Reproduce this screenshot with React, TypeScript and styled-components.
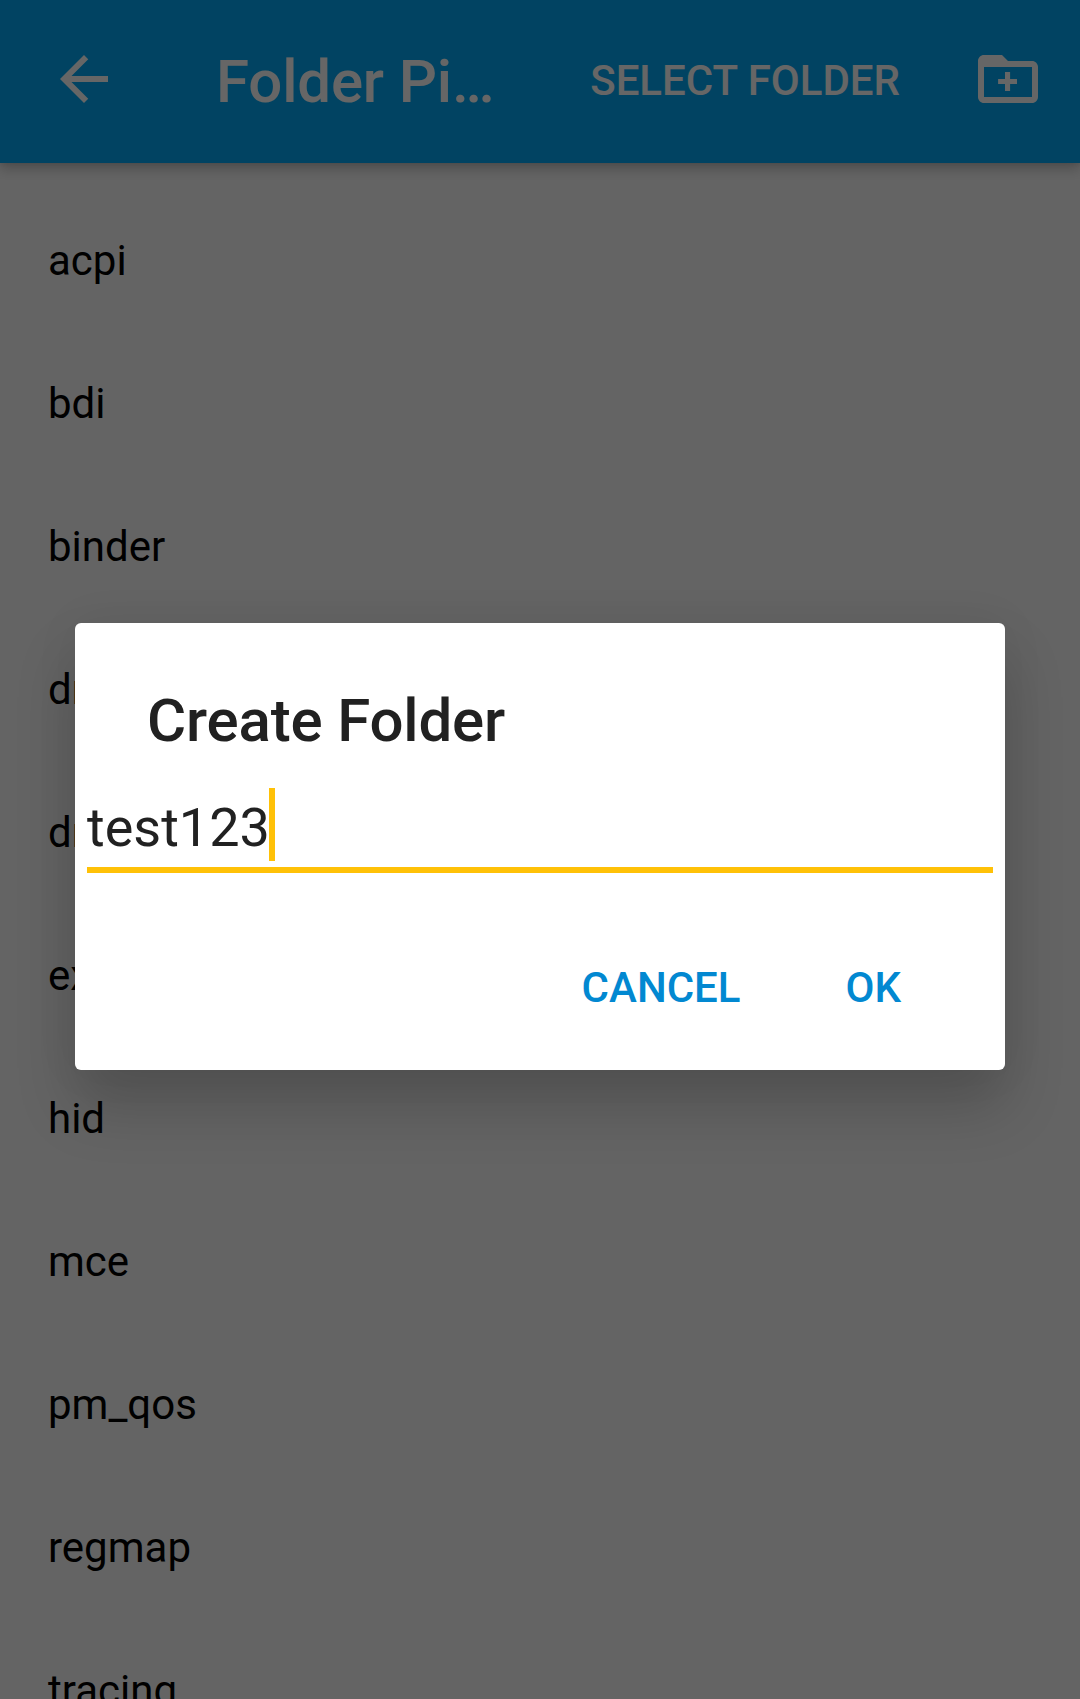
import React from 'react';
import styled, { createGlobalStyle } from 'styled-components';

const GlobalStyle = createGlobalStyle`
  * { box-sizing: border-box; }
  html, body { margin: 0; padding: 0; }
  body { overflow: hidden; font-family: Roboto, "Noto Sans", sans-serif; }
  h1, h2, ul { margin: 0; padding: 0; }
`;

const Screen = styled.div`
  position: relative;
  width: 1080px;
  height: 1699px;
  overflow: hidden;
  background: #fafafa;
`;

const Toolbar = styled.header`
  position: relative;
  display: flex;
  align-items: flex-start;
  height: 163px;
  padding: 43px 36px 0 48px;
  background: #03a9f4;
  color: #fff;
  box-shadow: 0 6px 12px rgba(0, 0, 0, 0.22), 0 1px 5px rgba(0, 0, 0, 0.08);
`;

const IconButton = styled.button`
  display: flex;
  flex: none;
  width: 72px;
  height: 72px;
  padding: 0;
  border: 0;
  background: none;
  color: inherit;

  svg {
    width: 72px;
    height: 72px;
    fill: currentColor;
  }
`;

const Title = styled.h1`
  width: 280px;
  margin-left: 96px;
  padding-top: 3px;
  overflow: hidden;
  font-size: 60px;
  font-weight: 500;
  letter-spacing: -0.17px;
  line-height: 72px;
  text-overflow: ellipsis;
  white-space: nowrap;
`;

const ToolbarAction = styled.button`
  margin-left: auto;
  margin-right: 72px;
  padding: 2px 0 0;
  border: 0;
  background: none;
  color: inherit;
  font: 500 42px/72px Roboto, sans-serif;
  text-transform: uppercase;
  white-space: nowrap;
`;

const FolderList = styled.ul`
  padding-top: 26px;
  list-style: none;
`;

const FolderRow = styled.li`
  display: flex;
  align-items: center;
  height: 143px;
  padding: 0 48px;
  color: #000;
  font-size: 42px;
`;

const Scrim = styled.div`
  position: absolute;
  inset: 0;
  display: flex;
  align-items: flex-start;
  justify-content: center;
  padding-top: 623px;
  background: rgba(0, 0, 0, 0.6);
`;

const Dialog = styled.section`
  display: flex;
  flex-direction: column;
  width: 930px;
  height: 447px;
  border-radius: 6px;
  background: #fff;
  color: #212121;
  box-shadow: 0 36px 60px rgba(0, 0, 0, 0.19), 0 0 48px rgba(0, 0, 0, 0.05);
`;

const DialogTitle = styled.h2`
  padding: 62px 72px 0;
  font-size: 60px;
  font-weight: 500;
  letter-spacing: -0.17px;
  line-height: 72px;
`;

const Field = styled.div`
  display: flex;
  align-items: flex-start;
  height: 85px;
  margin: 31px 12px 0;
  border-bottom: 6px solid #ffc107;
  font-size: 54px;
  line-height: 79px;
`;

const Caret = styled.span`
  width: 6px;
  height: 73px;
  margin-left: -1px;
  background: #ffc107;
`;

const DialogActions = styled.footer`
  display: flex;
  justify-content: flex-end;
  gap: 105px;
  margin-top: 79px;
  padding-right: 104px;
`;

const TextButton = styled.button`
  padding: 0;
  border: 0;
  background: none;
  color: #0288d1;
  font: 500 42px/72px Roboto, sans-serif;
  text-transform: uppercase;
`;

const folders = [
  'acpi',
  'bdi',
  'binder',
  'dma_buf',
  'dri',
  'extcon',
  'hid',
  'mce',
  'pm_qos',
  'regmap',
  'tracing',
];

export default function App() {
  return (
    <Screen>
      <GlobalStyle />
      <Toolbar>
        <IconButton aria-label="Back">
          <svg viewBox="0 0 24 24">
            <path d="M20 11H7.83l5.59-5.59L12 4l-8 8 8 8 1.41-1.41L7.83 13H20v-2z" />
          </svg>
        </IconButton>
        <Title>Folder Picker</Title>
        <ToolbarAction>Select folder</ToolbarAction>
        <IconButton aria-label="New folder">
          <svg viewBox="0 0 24 24">
            <path
              fillRule="evenodd"
              d="M20 6h-8l-2-2H4c-1.11 0-2 .89-2 2v12c0 1.11.89 2 2 2h16c1.11 0 2-.89 2-2V8c0-1.11-.89-2-2-2zM4 8v10h16V8zM11 9.7h1.7v2.3h2.3v1.7h-2.3v2.3H11v-2.3H8.7V12H11z"
            />
          </svg>
        </IconButton>
      </Toolbar>
      <FolderList>
        {folders.map((name) => (
          <FolderRow key={name}>{name}</FolderRow>
        ))}
      </FolderList>
      <Scrim>
        <Dialog role="dialog" aria-label="Create Folder">
          <DialogTitle>Create Folder</DialogTitle>
          <Field>
            <span>test123</span>
            <Caret />
          </Field>
          <DialogActions>
            <TextButton>Cancel</TextButton>
            <TextButton>OK</TextButton>
          </DialogActions>
        </Dialog>
      </Scrim>
    </Screen>
  );
}
